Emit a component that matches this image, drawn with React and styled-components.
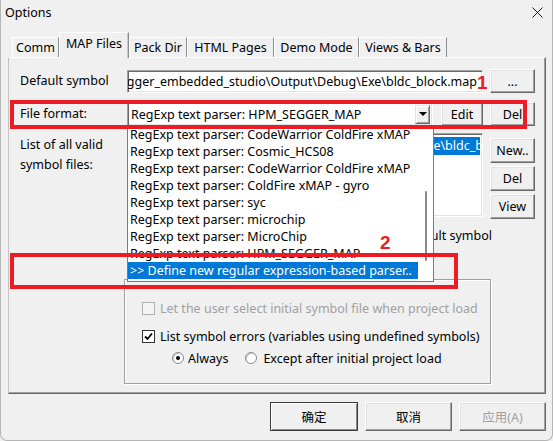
import styled, { createGlobalStyle } from "styled-components";

const GlobalStyle = createGlobalStyle`
  html, body {
    margin: 0;
    padding: 0;
    background: #f0f0f0;
  }
  body {
    font-family: "Noto Sans", "Noto Sans CJK SC", sans-serif;
    font-size: 12.5px;
    color: #000;
  }
  * { box-sizing: border-box; }
`;

const Window = styled.div`
  position: relative;
  width: 553px;
  height: 441px;
  background: #f0f0f0;
  border: 1px solid #b4b4b4;
  border-top: none;
  border-radius: 0 0 7px 7px;
  display: flex;
  flex-direction: column;
  overflow: hidden;
`;

const TitleBar = styled.div`
  height: 25px;
  display: flex;
  align-items: center;
  justify-content: space-between;
  padding: 0 9px 0 4px;
  font-size: 12.5px;
`;

const TabStrip = styled.div`
  display: flex;
  align-items: flex-end;
  height: 25px;
  margin-top: 7px;
  padding-left: 11px;
  position: relative;
  z-index: 1;
`;

const Tab = styled.div`
  width: ${(p) => p.$w}px;
  height: ${(p) => (p.$active ? 26 : 20)}px;
  margin-bottom: ${(p) => (p.$active ? -1 : 0)}px;
  display: flex;
  align-items: center;
  justify-content: center;
  padding-bottom: ${(p) => (p.$active ? 4 : 0)}px;
  background: #f0f0f0;
  border: 1px solid;
  border-bottom: none;
  border-color: #fff #8c8c8c #fff #fff;
  box-shadow: ${(p) => (p.$active ? "inset -1px 0 #c8c8c8" : "none")};
  white-space: nowrap;
`;

const Panel = styled.div`
  margin-left: 7px;
  width: 538px;
  height: 337px;
  border: 1px solid;
  border-color: #fff #696969 #696969 #c4c4c4;
  box-shadow: inset -1px -1px #a0a0a0;
  padding: 11px 8px 0 11px;
  display: flex;
  flex-direction: column;
`;

const FormRow = styled.div`
  display: grid;
  grid-template-columns: 100px 356px 45px;
  column-gap: 7px;
  align-items: ${(p) => p.$align || "center"};
  margin-top: ${(p) => p.$mt || 0}px;
`;

const Label = styled.div`
  line-height: ${(p) => p.$lh || 16}px;
  margin-top: ${(p) => p.$mt || 0}px;
  white-space: nowrap;
`;

const Sunken = styled.div`
  background: #fff;
  border: 1px solid;
  border-color: #a0a0a0 #fff #fff #a0a0a0;
  box-shadow: inset 1px 1px #696969, inset -1px -1px #e3e3e3;
`;

const TextBox = styled(Sunken)`
  height: 23px;
  display: flex;
  align-items: center;
  justify-content: flex-end;
  overflow: hidden;
  white-space: nowrap;
  padding-right: 5px;
`;

const Combo = styled(Sunken)`
  width: 306px;
  height: 24px;
  display: flex;
  align-items: center;
  padding: 2px 2px 2px 3px;
  white-space: nowrap;
`;

const ComboText = styled.div`
  flex: 1;
`;

const ArrowButton = styled.div`
  width: 15px;
  height: 19px;
  background: #f0f0f0;
  border: 1px solid;
  border-color: #e3e3e3 #696969 #696969 #e3e3e3;
  box-shadow: inset 1px 1px #fff, inset -1px -1px #a0a0a0;
  display: flex;
  align-items: center;
  justify-content: center;
`;

const Triangle = styled.div`
  width: 0;
  height: 0;
  border-left: 4px solid transparent;
  border-right: 4px solid transparent;
  border-top: 4px solid #000;
`;

const Button = styled.div`
  width: ${(p) => p.$w || 45}px;
  height: ${(p) => p.$h || 24}px;
  display: flex;
  align-items: center;
  justify-content: center;
  background: #f0f0f0;
  color: ${(p) => (p.$disabled ? "#a0a0a0" : "#000")};
  border: 1px solid;
  border-color: ${(p) =>
    p.$default ? "#3c3c3c" : "#fff #696969 #696969 #fff"};
  box-shadow: ${(p) =>
    p.$default
      ? "inset 1px 1px #fff, inset -1px -1px #8a8a8a"
      : "inset -1px -1px #a0a0a0, inset 1px 1px #e3e3e3"};
  white-space: nowrap;
`;

const FileFormat = styled.div`
  display: flex;
  align-items: center;
  gap: 8px;
`;

const ListBox = styled(Sunken)`
  height: 84px;
  padding: 3px 2px;
  overflow: hidden;
`;

const ListItem = styled.div`
  height: 18px;
  line-height: 18px;
  padding-left: 2px;
  white-space: nowrap;
  background: ${(p) => (p.$selected ? "#0078d7" : "transparent")};
  color: ${(p) => (p.$selected ? "#fff" : "#000")};
`;

const ButtonColumn = styled.div`
  display: flex;
  flex-direction: column;
  gap: 3px;
  margin-top: 5px;
`;

const CheckRow = styled.div`
  display: flex;
  align-items: center;
  gap: ${(p) => p.$gap || 5}px;
  height: 16px;
  margin-top: ${(p) => p.$mt || 0}px;
  color: ${(p) => (p.$disabled ? "#a0a0a0" : "#000")};
  white-space: nowrap;
`;

const DefaultRow = styled(CheckRow)`
  margin-top: 8px;
  margin-left: 325px;
`;

const Box = styled.div`
  width: 13px;
  height: 13px;
  background: ${(p) => (p.$disabled ? "#f4f4f4" : "#fff")};
  border: 1px solid ${(p) => (p.$disabled ? "#b0b0b0" : "#333")};
  display: flex;
  align-items: center;
  justify-content: center;
`;

const RadioCircle = styled.div`
  width: 12px;
  height: 12px;
  border-radius: 50%;
  background: #fff;
  border: 1px solid #8a8a8a;
  box-shadow: inset 1px 1px #c8c8c8;
  display: flex;
  align-items: center;
  justify-content: center;
`;

const Dot = styled.div`
  width: 4px;
  height: 4px;
  border-radius: 50%;
  background: #000;
`;

const RadioGroup = styled.div`
  display: flex;
  align-items: center;
  gap: 17px;
  margin-left: 30px;
  margin-top: 6px;
`;

const GroupBox = styled.div`
  margin-top: 36px;
  margin-left: 104px;
  width: 367px;
  height: 105px;
  border: 1px solid #a0a0a0;
  box-shadow: inset 1px 1px #fff, 1px 1px #fff;
  padding: 20px 0 0 17px;
  display: flex;
  flex-direction: column;
`;

const Footer = styled.div`
  display: flex;
  justify-content: flex-end;
  gap: 7px;
  margin-top: 8px;
  padding-right: 6px;
`;

/* dropdown list lying over the panel */
const Popup = styled.div`
  position: absolute;
  left: 126px;
  top: 126px;
  width: 307px;
  height: 156px;
  background: #fff;
  border: 1px solid #7a7a7a;
  border-top: none;
  display: flex;
  z-index: 2;
`;

const PopupItems = styled.div`
  flex: 1;
  overflow: hidden;
`;

const PopupItem = styled.div`
  height: 17px;
  line-height: 17px;
  padding-left: 2px;
  white-space: nowrap;
  background: ${(p) => (p.$selected ? "#0078d7" : "transparent")};
  color: ${(p) => (p.$selected ? "#fff" : "#000")};
`;

const ScrollTrack = styled.div`
  width: 15px;
  padding-top: 65px;
  display: flex;
  justify-content: center;
`;

const Thumb = styled.div`
  width: 2px;
  height: 70px;
  background: #8a8a8a;
  border-radius: 1px;
`;

const RedBox = styled.div`
  position: absolute;
  left: ${(p) => p.$x}px;
  top: ${(p) => p.$y}px;
  width: ${(p) => p.$w}px;
  height: ${(p) => p.$h}px;
  border: 4px solid #ed1c24;
  z-index: 3;
`;

const Mark = styled.div`
  position: absolute;
  left: ${(p) => p.$x}px;
  top: ${(p) => p.$y}px;
  font-family: "Liberation Sans", Arial, sans-serif;
  font-weight: bold;
  font-size: 19px;
  line-height: 19px;
  color: #ed1c24;
  z-index: 3;
`;

const CloseIcon = () => (
  <svg width="11" height="11" viewBox="0 0 11 11">
    <path d="M0.5 0.5 L10.5 10.5 M10.5 0.5 L0.5 10.5" stroke="#1a1a1a" strokeWidth="1" />
  </svg>
);

const Check = () => (
  <svg width="9" height="9" viewBox="0 0 9 9">
    <path d="M1 4.5 L3.5 7 L8 1.5" fill="none" stroke="#000" strokeWidth="1.8" />
  </svg>
);

const tabs = [
  { name: "Comm", w: 47 },
  { name: "MAP Files", w: 70, active: true },
  { name: "Pack Dir", w: 58 },
  { name: "HTML Pages", w: 87 },
  { name: "Demo Mode", w: 85 },
  { name: "Views & Bars", w: 88 },
];

const parsers = [
  "RegExp text parser: CodeWarrior ColdFire xMAP",
  "RegExp text parser: Cosmic_HCS08",
  "RegExp text parser: CodeWarrior ColdFire xMAP",
  "RegExp text parser: ColdFire xMAP - gyro",
  "RegExp text parser: syc",
  "RegExp text parser: microchip",
  "RegExp text parser: MicroChip",
  "RegExp text parser: HPM_SEGGER_MAP",
];

export default function App() {
  return (
    <>
      <GlobalStyle />
      <Window>
        <TitleBar>
          <span>Options</span>
          <CloseIcon />
        </TitleBar>

        <TabStrip>
          {tabs.map((t) => (
            <Tab key={t.name} $w={t.w} $active={t.active}>
              {t.name}
            </Tab>
          ))}
        </TabStrip>

        <Panel>
          <FormRow>
            <Label>Default symbol</Label>
            <TextBox>
              D:\hpm_sdk\samples\motor_ctrl\bldc_block\segger_embedded_studio\Output\Debug\Exe\bldc_block.map
            </TextBox>
            <Button>...</Button>
          </FormRow>

          <FormRow $mt={9}>
            <Label>File format:</Label>
            <FileFormat>
              <Combo>
                <ComboText>RegExp text parser: HPM_SEGGER_MAP</ComboText>
                <ArrowButton>
                  <Triangle />
                </ArrowButton>
              </Combo>
              <Button $w={42}>Edit</Button>
            </FileFormat>
            <Button>Del</Button>
          </FormRow>

          <FormRow $mt={7} $align="start">
            <Label $lh={20} $mt={2}>
              List of all valid
              <br />
              symbol files:
            </Label>
            <ListBox>
              <ListItem $selected>
                C:\sdk\segger_embedded_studio\Output\Debug\Exe\bldc_block.map
              </ListItem>
            </ListBox>
            <ButtonColumn>
              <Button $h={25}>New..</Button>
              <Button $h={25}>Del</Button>
              <Button $h={25}>View</Button>
            </ButtonColumn>
          </FormRow>

          <DefaultRow>
            <Box />
            <span>Use as default symbol</span>
          </DefaultRow>

          <GroupBox>
            <CheckRow $disabled>
              <Box $disabled />
              <span>Let the user select initial symbol file when project load</span>
            </CheckRow>
            <CheckRow $mt={12}>
              <Box>
                <Check />
              </Box>
              <span>List symbol errors (variables using undefined symbols)</span>
            </CheckRow>
            <RadioGroup>
              <CheckRow $gap={4}>
                <RadioCircle>
                  <Dot />
                </RadioCircle>
                <span>Always</span>
              </CheckRow>
              <CheckRow $gap={6}>
                <RadioCircle />
                <span>Except after initial project load</span>
              </CheckRow>
            </RadioGroup>
          </GroupBox>
        </Panel>

        <Footer>
          <Button $w={88} $h={29} $default>确定</Button>
          <Button $w={87} $h={29}>取消</Button>
          <Button $w={87} $h={29} $disabled>应用(A)</Button>
        </Footer>

        <Popup>
          <PopupItems>
            {parsers.map((p, i) => (
              <PopupItem key={i}>{p}</PopupItem>
            ))}
            <PopupItem $selected>&gt;&gt; Define new regular expression-based parser..</PopupItem>
          </PopupItems>
          <ScrollTrack>
            <Thumb />
          </ScrollTrack>
        </Popup>

        <RedBox $x={9} $y={100} $w={517} $h={29} />
        <RedBox $x={9} $y={253} $w={448} $h={36} />
        <Mark $x={476} $y={73}>1</Mark>
        <Mark $x={379} $y={233}>2</Mark>
      </Window>
    </>
  );
}
